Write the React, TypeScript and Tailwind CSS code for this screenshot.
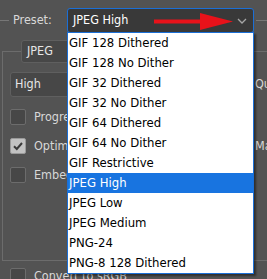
import React from 'react';

const PRESETS = [
  'GIF 128 Dithered',
  'GIF 128 No Dither',
  'GIF 32 Dithered',
  'GIF 32 No Dither',
  'GIF 64 Dithered',
  'GIF 64 No Dither',
  'GIF Restrictive',
  'JPEG High',
  'JPEG Low',
  'JPEG Medium',
  'PNG-24',
  'PNG-8 128 Dithered',
];

const Checkbox: React.FC<{ checked?: boolean }> = ({ checked }) => (
  <div
    className={
      checked
        ? 'w-[16px] h-[16px] rounded-[2px] bg-[#c2c2c2] border border-[#9a9a9a] flex items-center justify-center'
        : 'w-[16px] h-[16px] rounded-[2px] bg-[#474747] border border-[#6c6c6c]'
    }
  >
    {checked && (
      <svg width="12" height="12" viewBox="0 0 12 12">
        <path d="M2 6.2 L4.8 9 L10 3" fill="none" stroke="#3a3a3a" strokeWidth="2" />
      </svg>
    )}
  </div>
);

const CheckRow: React.FC<{ label: string; checked?: boolean; right?: string; className?: string }> = ({
  label,
  checked,
  right,
  className,
}) => (
  <div className={`flex items-center h-[16px] ${className ?? ''}`}>
    <div className="flex items-center gap-[8px] w-[245px] shrink-0">
      <Checkbox checked={checked} />
      <span className="text-[#d8d8d8] whitespace-nowrap">{label}</span>
    </div>
    {right && <span className="text-[#d8d8d8] whitespace-nowrap">{right}</span>}
  </div>
);

export default function App() {
  return (
    <div className="w-[267px] h-[279px] bg-[#535353] overflow-hidden relative font-['DejaVu_Sans_Condensed','Liberation_Sans',sans-serif] text-[12.5px]">
      {/* Preset row */}
      <div className="flex items-center pt-[8px]">
        <div className="w-[9px] h-px bg-[#777777] shrink-0" />
        <span className="ml-[4px] w-[54px] shrink-0 text-[#d8d8d8]">Preset:</span>
        <div className="relative w-[187px] shrink-0">
          <div className="h-[25px] rounded-[3px] border border-[#1b6fd6] bg-[#393939] flex items-center pl-[5px] pr-[6px]">
            <span className="text-white flex-1">JPEG High</span>
            <svg width="10" height="6" viewBox="0 0 10 6">
              <path d="M1 1 L5 5 L9 1" fill="none" stroke="#a6a6a6" strokeWidth="1.3" />
            </svg>
          </div>

          {/* open list */}
          <div className="absolute left-0 top-[24px] w-full z-10 bg-white border border-[#1b6fd6] shadow-[2px_2px_2px_rgba(0,0,0,0.45)] text-[13px]">
            {PRESETS.map(p => (
              <div
                key={p}
                className={
                  p === 'JPEG High'
                    ? 'h-[20px] leading-[20px] pl-[1px] bg-[#1874e0] text-white whitespace-nowrap'
                    : 'h-[20px] leading-[20px] pl-[1px] text-black whitespace-nowrap'
                }
              >
                {p}
              </div>
            ))}
          </div>

          {/* red arrow annotation */}
          <svg className="absolute left-[87px] top-[4px] z-20" width="82" height="20" viewBox="0 0 82 20">
            <rect x="0" y="7.5" width="48" height="4" fill="#e8121a" />
            <polygon points="46,1 79,9.5 46,18" fill="#e8121a" />
          </svg>
        </div>
        <div className="flex-1 h-px bg-[#777777] ml-[2px]" />
      </div>

      {/* Format group */}
      <fieldset className="mt-[7px] ml-[2px] w-[300px] border border-[#6c6c6c] pl-[7px] pt-[9px] pb-[77px]">
        <legend className="ml-[11px]">
          <div className="w-[90px] h-[23px] rounded-[3px] bg-[#474747] border border-[#5f5f5f] flex items-center pl-[5px] text-[#e6e6e6]">
            JPEG
          </div>
        </legend>

        <div className="flex items-center h-[25px]">
          <div className="w-[245px] shrink-0">
            <div className="w-[150px] h-[25px] rounded-[3px] bg-[#474747] border border-[#5f5f5f] flex items-center pl-[4px] text-[#e6e6e6]">
              High
            </div>
          </div>
          <span className="text-[#d8d8d8] whitespace-nowrap">Quality:</span>
        </div>

        <CheckRow className="mt-[12px]" label="Progressive" />
        <CheckRow className="mt-[13px]" label="Optimized" checked right="Matte:" />
        <CheckRow className="mt-[13px]" label="Embed Color Profile" />
      </fieldset>

      <div className="mt-[7px] ml-[10px]">
        <CheckRow label="Convert to sRGB" />
      </div>
    </div>
  );
}
